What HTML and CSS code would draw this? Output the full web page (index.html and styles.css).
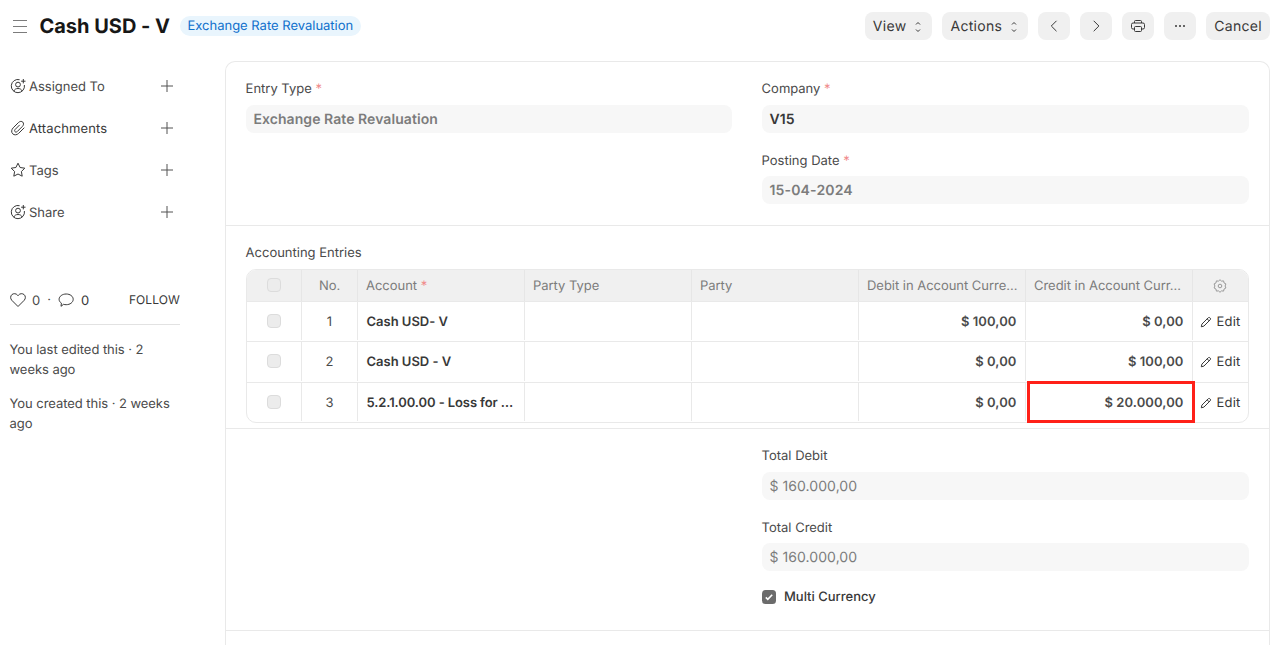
FILE: index.html
```html
<!DOCTYPE html>
<html lang="en">
<head>
<meta charset="utf-8">
<title>Cash USD - V</title>
<link rel="stylesheet" href="styles.css">
</head>
<body>
<svg class="sprite" aria-hidden="true">
  <symbol id="plus" viewBox="0 0 12 12"><path d="M6 0v12M0 6h12"/></symbol>
  <symbol id="user" viewBox="0 0 16 16"><path d="M9.6 1.7A6.6 6.6 0 1 0 14.4 7M3.8 13.1c.6-1.700 2.200-2.600 4.200-2.600s3.600.9 4.200 2.600M13.300 1v4.400M11.100 3.200h4.400"/><circle cx="8" cy="6.600" r="2.400"/></symbol>
  <symbol id="clip" viewBox="0 0 16 16"><path d="M14.300 7.700l-5.600 5.600c-1.800 1.800-4.400 2.100-6 .5s-1.300-4.200.5-6l5.300-5.300c1.300-1.300 3.200-1.500 4.300-.4s.9 3-.4 4.300l-5.100 5.100c-.7.7-1.700.8-2.300.2s-.5-1.600.2-2.300l4.500-4.500"/></symbol>
  <symbol id="star" viewBox="0 0 16 16"><path d="M8 1.200l2.100 4.300 4.700.7-3.400 3.300.8 4.700L8 12l-4.200 2.200.8-4.700L1.200 6.200l4.700-.7z"/></symbol>
  <symbol id="pencil" viewBox="0 0 12 12"><path d="M1.300 10.800l.6-2.700 6.300-6.300c.5-.5 1.300-.5 1.800 0l.2.200c.5.5.5 1.300 0 1.800L3.900 10.100zM7.200 2.900l2 2"/></symbol>
  <symbol id="updown" viewBox="0 0 8 12"><path d="M2 3.500l2-2 2 2M2 8.500l2 2 2-2"/></symbol>
</svg>

<header class="page-head">
  <svg class="menu" viewBox="0 0 14 15"><path d="M0 1.500h14M0 7.500h14M0 13.500h14"/></svg>
  <h1>Cash USD - V</h1>
  <span class="pill">Exchange Rate Revaluation</span>
  <div class="actions">
    <button class="btn">View <svg class="updown"><use href="#updown"/></svg></button>
    <button class="btn">Actions <svg class="updown"><use href="#updown"/></svg></button>
    <button class="btn icon"><svg viewBox="0 0 16 16"><path d="M10.500 2.800L5.300 8l5.200 5.200"/></svg></button>
    <button class="btn icon"><svg viewBox="0 0 16 16"><path d="M5.700 2.800L10.900 8l-5.200 5.200"/></svg></button>
    <button class="btn icon"><svg viewBox="0 0 16 16"><path d="M4.500 5V3.500a1 1 0 0 1 1-1h5a1 1 0 0 1 1 1V5M4.500 11H3a1.500 1.500 0 0 1-1.500-1.500v-3A1.500 1.500 0 0 1 3 5h10a1.500 1.500 0 0 1 1.500 1.500v3A1.500 1.500 0 0 1 13 11h-1.500M5.500 8.500h5a1 1 0 0 1 1 1v3a1 1 0 0 1-1 1h-5a1 1 0 0 1-1-1v-3a1 1 0 0 1 1-1z"/></svg></button>
    <button class="btn icon"><svg class="dots" viewBox="0 0 16 16"><circle cx="4" cy="8" r="1"/><circle cx="8" cy="8" r="1"/><circle cx="12" cy="8" r="1"/></svg></button>
    <button class="btn">Cancel</button>
  </div>
</header>

<div class="layout">
  <aside class="sidebar">
    <ul class="side-menu">
      <li><svg class="ico"><use href="#user"/></svg><span>Assigned To</span><svg class="plus"><use href="#plus"/></svg></li>
      <li class="dark"><svg class="ico"><use href="#clip"/></svg><span>Attachments</span><svg class="plus"><use href="#plus"/></svg></li>
      <li><svg class="ico"><use href="#star"/></svg><span>Tags</span><svg class="plus"><use href="#plus"/></svg></li>
      <li><svg class="ico"><use href="#user"/></svg><span>Share</span><svg class="plus"><use href="#plus"/></svg></li>
    </ul>
    <div class="stats">
      <svg class="ico" viewBox="0 0 16 16"><path d="M8 14.500L1.800 8.300C.2 6.600.3 4 1.900 2.600s4.200-1.200 5.600.5l.5.600.5-.6c1.400-1.700 4-1.900 5.600-.5s1.700 4 .1 5.700z"/></svg>
      <span class="likes">0</span><span class="dot">·</span>
      <svg class="ico" viewBox="0 0 16 16"><path d="M8.200 2c3.900 0 7 2.300 7 5.300s-3.100 5.400-7 5.400c-.9 0-1.800-.1-2.600-.4L3 14.300l.4-3.200C1.900 10.200 1.100 8.800 1.100 7.300 1.100 4.300 4.300 2 8.200 2z"/></svg>
      <span class="comments">0</span>
      <span class="follow">FOLLOW</span>
    </div>
    <p>You last edited this · 2 weeks ago</p>
    <p>You created this · 2 weeks ago</p>
  </aside>

  <main class="card">
    <section class="section two-col">
      <div class="col">
        <div class="field"><label>Entry Type <i>*</i></label><div class="input strong">Exchange Rate Revaluation</div></div>
      </div>
      <div class="col">
        <div class="field"><label>Company <i>*</i></label><div class="input strong active">V15</div></div>
        <div class="field"><label>Posting Date <i>*</i></label><div class="input strong date">15-04-2024</div></div>
      </div>
    </section>

    <section class="section entries">
      <label>Accounting Entries</label>
      <div class="grid">
        <div class="row head">
          <div class="c mid"><span class="check"></span></div><div class="c mid">No.</div><div class="c">Account&nbsp;<i>*</i></div><div class="c">Party Type</div><div class="c">Party</div><div class="c">Debit in Account Curre…</div><div class="c">Credit in Account Curr…</div>
          <div class="c mid"><svg class="gear" viewBox="0 0 14 14"><path d="M7 .7l1.500 1.400 2.100-.2.400 2 1.900 1-.8 2.100.8 2-1.900 1.100-.4 2-2.100-.2L7 13.300l-1.500-1.400-2.100.2-.4-2L1.100 9l.8-2-.8-2.100L3 3.900l.4-2 2.100.2z"/><circle cx="7" cy="7" r="1.800"/></svg></div>
        </div>
        <div class="row">
          <div class="c mid"><span class="check"></span></div><div class="c mid">1</div><div class="c account">Cash USD- V</div><div class="c"></div><div class="c"></div><div class="c num">$ 100,00</div><div class="c num">$ 0,00</div><div class="c edit"><svg><use href="#pencil"/></svg>Edit</div>
        </div>
        <div class="row tall">
          <div class="c mid"><span class="check"></span></div><div class="c mid">2</div><div class="c account">Cash USD - V</div><div class="c"></div><div class="c"></div><div class="c num">$ 0,00</div><div class="c num">$ 100,00</div><div class="c edit"><svg><use href="#pencil"/></svg>Edit</div>
        </div>
        <div class="row">
          <div class="c mid"><span class="check"></span></div><div class="c mid">3</div><div class="c account long">5.2.1.00.00 - Loss for …</div><div class="c"></div><div class="c"></div><div class="c num">$ 0,00</div><div class="c num marked">$ 20.000,00</div><div class="c edit"><svg><use href="#pencil"/></svg>Edit</div>
        </div>
      </div>
    </section>

    <section class="section two-col totals">
      <div class="col"></div>
      <div class="col">
        <div class="field"><label>Total Debit</label><div class="input">$ 160.000,00</div></div>
        <div class="field"><label>Total Credit</label><div class="input">$ 160.000,00</div></div>
        <div class="checkline"><svg viewBox="0 0 14 14"><rect width="14" height="14" rx="3.500"/><path d="M3.800 7.400l2 2 4.400-4.600"/></svg>Multi Currency</div>
      </div>
    </section>
    <section class="rest"></section>
  </main>
</div>
</body>
</html>
```
FILE: styles.css
```css
* { box-sizing: border-box; }

body {
  margin: 0;
  height: 645px;
  overflow: hidden;
  background: #fff;
  color: #4a4a4a;
  font: 13px/20px Inter, sans-serif;
  letter-spacing: -0.01px;
  text-rendering: geometricPrecision;
  display: flex;
  flex-direction: column;
}

svg {
  fill: none;
  stroke: #383838;
  flex: none;
}

.sprite { display: none; }

i {
  color: #f08a8a;
  font-style: normal;
}

.page-head {
  height: 61px;
  padding: 12px 17px 0 13px;
  display: flex;
  align-items: flex-start;
  flex: none;
}

.menu {
  width: 14px;
  height: 15px;
  margin-top: 7px;
  stroke: #7c7c7c;
}

h1 {
  margin: 0 0 0 12.500px;
  font-size: 20px;
  line-height: 28px;
  font-weight: 700;
  letter-spacing: -0.02px;
  color: #171717;
  white-space: nowrap;
}

.pill {
  margin: 4px 0 0 10px;
  padding: 0 8px 0 7.500px;
  border-radius: 10px;
  background: #e9f5fd;
  color: #0f70cc;
  white-space: nowrap;
}

.actions {
  display: flex;
  gap: 10px;
  margin-left: auto;
}

.btn {
  height: 28px;
  padding: 1px 8px 0;
  border: 0;
  border-radius: 8px;
  background: #f0f0f0;
  color: #383838;
  font: 14px/27px Inter, sans-serif;
  letter-spacing: 0.3px;
  text-rendering: inherit;
  display: flex;
  align-items: center;
}

.btn.icon {
  width: 32px;
  padding-top: 0;
  justify-content: center;
}

.btn svg { width: 16px; height: 16px; }
.btn .updown { width: 8px; height: 12px; margin: 0 2px 0 8px; }
.btn .dots { fill: #383838; stroke: none; }

.layout {
  flex: 1;
  display: flex;
  min-height: 0;
}

.sidebar {
  width: 225px;
  padding: 15px 45px 0 10px;
  flex: none;
}

.side-menu {
  list-style: none;
  margin: 0 0 66px;
  padding: 0;
  display: grid;
  gap: 22px;
}

.side-menu li {
  display: flex;
  align-items: center;
  height: 20px;
  padding-right: 7px;
}

.side-menu span { padding-top: 2px; }
.side-menu .dark { color: #383838; letter-spacing: 0.1px; }
.ico { width: 16px; height: 16px; margin-right: 3px; }
.plus { width: 12px; height: 12px; margin-left: auto; stroke: #525252; }

.stats {
  display: flex;
  align-items: center;
  height: 37px;
  padding-bottom: 12px;
  margin-bottom: 15px;
  border-bottom: 1px solid #e2e2e2;
}

.stats .ico { margin: 0; }
.likes { margin-left: 6px; padding-top: 1px; }
.dot { margin: 0 7px 0 7px; }
.comments { margin-left: 7px; padding-top: 1px; color: #383838; }
.follow { margin-left: auto; font-size: 12px; letter-spacing: 0.1px; color: #383838; }

.sidebar p { margin: 0 0 14px -0.500px; letter-spacing: -0.05px; }

.card {
  width: 1045px;
  border: 1px solid #e9e9e9;
  border-bottom: 0;
  border-radius: 10px 10px 0 0;
}

.section {
  padding: 17px 20px 0;
  border-bottom: 1px solid #e9e9e9;
  height: 164px;
}

.section label { display: block; margin-left: -0.400px; }

.two-col {
  display: grid;
  grid-template-columns: 486px 487px;
  column-gap: 30px;
}

.field { margin-bottom: 18px; }
.field + .field { margin-bottom: 15px; }
.field label { margin-bottom: 6px; }
.field + .field label { margin-bottom: 5px; }

.input {
  height: 28px;
  padding: 1px 8px 0 7.500px;
  border-radius: 8px;
  background: #f7f7f7;
  color: #7c7c7c;
  font-size: 14px;
  line-height: 28px;
  letter-spacing: 0.06px;
}

.input.strong { font-weight: 600; }
.input.date { letter-spacing: 0.16px; }
.input.active { color: #383838; }

.entries { height: 203px; }

.grid {
  width: 1003px;
  margin-top: 6px;
  border: 1px solid #e9e9e9;
  border-radius: 10px;
}

.row {
  display: grid;
  grid-template-columns: 55px 56px repeat(5, 167px) 55px;
  height: 40px;
  border-bottom: 1px solid #e9e9e9;
  padding-bottom: 1px;
}

.row.tall { height: 41px; }
.row:last-child { height: 39px; border-bottom: 0; }

.row.head {
  height: 32px;
  padding-bottom: 0;
  background: #f0f0f0;
  border-radius: 9px 9px 0 0;
  color: #7c7c7c;
}

.c {
  display: flex;
  align-items: center;
  padding: 2px 8.500px 0 8.500px;
  border-right: 1px solid #e9e9e9;
  white-space: nowrap;
}

.head .c { border-right-color: #e6e6e6; padding: 1px 8px 0; letter-spacing: -0.03px; }
.tall .c { padding-top: 0; }
.row .c:last-child { border-right: 0; }
.row .mid { justify-content: center; padding-left: 0; padding-right: 0; }
.head .mid { padding-top: 0; padding-bottom: 0; }
.account { font-weight: 600; color: #383838; }
.long { letter-spacing: -0.1px; }
.num { justify-content: flex-end; font-weight: 600; letter-spacing: 0.08px; }
.row .edit { padding-left: 7px; padding-right: 0; color: #383838; letter-spacing: 0.2px; }
.edit svg { width: 12px; height: 12px; margin-right: 4.500px; }

.check {
  width: 14px;
  height: 14px;
  margin-top: -2px;
  border: 1px solid #dcdcdc;
  border-radius: 4px;
  background: #ececec;
}

.tall .check, .head .check { margin-top: -1px; }

.gear { width: 14px; height: 14px; margin: 0 2px 0 0; stroke: #999; }

.marked { position: relative; }

.marked::after {
  content: "";
  position: absolute;
  inset: -2px -3px -2px 1px;
  border: 3px solid #ff2018;
  z-index: 1;
}

.totals { height: 202px; }

.checkline {
  display: flex;
  align-items: center;
  gap: 8px;
  margin-top: 16px;
  color: #383838;
  font-weight: 500;
}

.checkline svg { width: 14px; height: 14px; }
.checkline rect { fill: #6b6b6b; stroke: none; }
.checkline path { stroke: #fff; stroke-width: 1.6; }

.totals .field + .field { margin-bottom: 0; }
```
